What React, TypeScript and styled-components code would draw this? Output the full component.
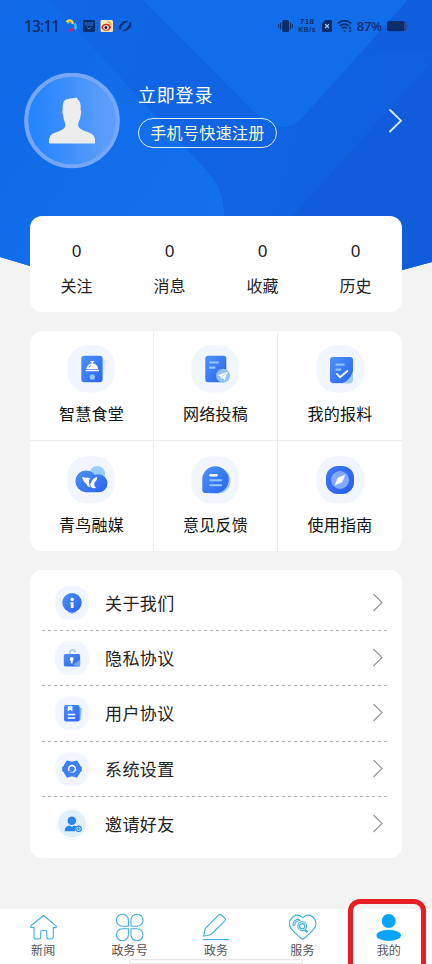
import React from 'react';
import styled, { createGlobalStyle } from 'styled-components';

const GlobalStyle = createGlobalStyle`
  * { box-sizing: border-box; }
  body {
    margin: 0;
    background: #f3f3f3;
    font-family: "Noto Sans CJK SC", "Noto Sans", sans-serif;
    font-weight: 400;
    color: #222;
  }
`;

const Screen = styled.main`
  position: relative;
  width: 432px;
  height: 964px;
  overflow: hidden;
  display: flex;
  flex-direction: column;
  isolation: isolate;
`;

const Backdrop = styled.svg`
  position: absolute;
  top: 0;
  left: 0;
  z-index: -1;
`;

const StatusBar = styled.header`
  height: 51px;
  padding: 0 24px;
  display: flex;
  justify-content: space-between;
  align-items: center;
  flex-shrink: 0;
  color: #0b2d6b;
  font-family: "Noto Sans", sans-serif;
`;

const StatusGroup = styled.div<{ $gap: number }>`
  display: flex;
  align-items: center;
  gap: ${(p) => p.$gap}px;
`;

const Clock = styled.span`
  font-size: 15.5px;
  font-weight: 500;
  line-height: 20px;
  letter-spacing: -0.9px;
  width: 36px;
`;

const Speed = styled.span`
  width: 19px;
  display: flex;
  flex-direction: column;
  align-items: center;
  white-space: nowrap;
  font-family: "Liberation Sans", sans-serif;
  font-weight: 700;
  letter-spacing: 0.5px;
`;

const SpeedValue = styled.span`
  font-size: 8px;
  line-height: 9px;
`;

const SpeedUnit = styled.span`
  font-size: 7px;
  line-height: 8px;
`;

const Percent = styled.span`
  font-size: 13px;
  font-weight: 500;
  line-height: 18px;
  padding-top: 1px;
  letter-spacing: -0.2px;
`;

const Profile = styled.section`
  height: 165px;
  padding: 22px 29px 0 24px;
  display: flex;
  align-items: flex-start;
  color: #fff;
  flex-shrink: 0;
`;

const ProfileText = styled.div`
  flex: 1;
  padding: 9px 0 0 18px;
  display: flex;
  flex-direction: column;
  align-items: flex-start;
  gap: 12px;
`;

const LoginTitle = styled.div`
  font-size: 18px;
  line-height: 24px;
  letter-spacing: 0.8px;
`;

const RegisterButton = styled.button`
  width: 139px;
  height: 30px;
  padding: 0 0 2px;
  border: 1px solid #d9ecf4;
  border-radius: 15px;
  background: transparent;
  color: #f9fbd5;
  font-family: inherit;
  font-size: 16px;
  letter-spacing: 0.35px;
  line-height: 24px;
  white-space: nowrap;
`;

const ProfileArrow = styled.svg`
  margin-top: 35px;
`;

const Card = styled.section`
  width: 372px;
  margin: 0 30px;
  background: #fff;
  border-radius: 12px;
  flex-shrink: 0;
`;

const StatsCard = styled(Card)`
  height: 96px;
  display: grid;
  grid-template-columns: repeat(4, 1fr);
`;

const Stat = styled.div`
  display: flex;
  flex-direction: column;
  align-items: center;
  padding-top: 23px;
  gap: 10px;
`;

const StatValue = styled.span`
  font-family: "Noto Sans", sans-serif;
  font-size: 17px;
  line-height: 24px;
`;

const StatLabel = styled.span`
  font-size: 16px;
  line-height: 24px;
`;

const FeatureCard = styled(Card)`
  height: 220px;
  margin-top: 19px;
  display: grid;
  grid-template-columns: 123px 123px 124px;
  grid-template-rows: 109px 110px;
  gap: 1px;
  background: #ededed;
  overflow: hidden;
`;

const Feature = styled.div`
  background: #fff;
  padding-top: 14px;
  display: flex;
  flex-direction: column;
  align-items: center;
  gap: 8px;
  font-size: 16px;
  line-height: 24px;
  letter-spacing: 0.3px;
  color: #111;

  svg { margin-right: 1px; }
  &:nth-child(n + 4) { padding-top: 15px; }
`;

const MenuCard = styled(Card)`
  height: 288px;
  margin-top: 19px;
  padding: 6px 12px 5px;
`;

const MenuRow = styled.div`
  height: 55.2px;
  padding: 0 6px 1px 13px;
  display: flex;
  align-items: center;
  background: repeating-linear-gradient(90deg, #b5b5b5 0 3px, transparent 3px 6px) left bottom / 345px 1px no-repeat;

  &:last-child { background: none; }
`;

const MenuLabel = styled.span`
  flex: 1;
  padding-left: 16px;
  font-size: 17px;
  line-height: 24px;
  letter-spacing: 0.4px;
`;

const TabBar = styled.nav`
  height: 55px;
  margin-top: auto;
  background: #fff;
  display: grid;
  grid-template-columns: repeat(5, 1fr);
`;

const Tab = styled.div`
  display: flex;
  flex-direction: column;
  align-items: center;
  padding-top: 4px;
  font-size: 12px;
  line-height: 16px;
  color: #555;
  letter-spacing: 0.1px;
  gap: 1px;
`;

const HomeIndicator = styled.div`
  position: absolute;
  left: 129px;
  bottom: 0;
  width: 174px;
  height: 5px;
  border: 1px solid #e6e6e6;
  border-radius: 2px;
  background: #fff;
`;

const Highlight = styled.div`
  position: absolute;
  left: 348px;
  top: 899px;
  width: 78px;
  height: 80px;
  border: 5px solid #e81e25;
  border-radius: 12px;
`;

const HeaderBackdrop = () => (
  <Backdrop width="432" height="310" viewBox="0 0 432 310">
    <defs>
      <linearGradient id="base" x1="0" y1="0" x2="1" y2="0.2">
        <stop offset="0" stopColor="#1168e6" />
        <stop offset="1" stopColor="#1060e0" />
      </linearGradient>
      <linearGradient id="leftPlane" x1="0" y1="0" x2="1" y2="1">
        <stop offset="0" stopColor="#1169e7" />
        <stop offset="1" stopColor="#1272ef" />
      </linearGradient>
      <clipPath id="headerShape"><path d="M0 0H432V262L258 309Q216 320 174 309L0 257Z" /></clipPath>
    </defs>
    <g clipPath="url(#headerShape)">
      <rect width="432" height="310" fill="url(#base)" />
      <path d="M0 0H48L207 171Q224 189 224 216V310H0Z" fill="url(#leftPlane)" />
      <path d="M143 0L255 113Q282 139 303 117L408 0Z" fill="#126de9" />
      <path d="M432 62L292 216V310H432Z" fill="#105cdb" />
      <path d="M408 0L364 50L432 52V0Z" fill="#105fdd" />
    </g>
  </Backdrop>
);

const Avatar = () => (
  <svg width="96" height="96" viewBox="0 0 96 96">
    <defs>
      <linearGradient id="avatarFill">
        <stop offset="0.1" stopColor="#2684fc" />
        <stop offset="0.85" stopColor="#5a9dfa" />
      </linearGradient>
    </defs>
    <circle cx="48" cy="47.5" r="45.8" fill="url(#avatarFill)" stroke="#74a7f8" strokeWidth="4" />
    <path d="M25 70.5V66.5Q25.5 61.5 31 59.7Q40 57 41.3 53.5Q41.6 51.5 40.7 49Q39.5 46 39.2 42.5Q37.8 38 38.7 37Q38 28.5 42 26.6Q46 24.9 51.5 25L53 24.2L53.4 26.2Q57.5 28.5 56.6 37Q57.8 38 56.7 42Q56.3 46.5 54.5 49.5Q53.8 52 54.5 53.8Q57 57.2 65 59.5Q70.6 61.5 71 66.5V70.5Z" fill="#ededee" />
  </svg>
);

const GradientDefs = styled.svg`
  position: absolute;
`;

const BlueGradient = () => (
  <GradientDefs width="0" height="0">
    <defs>
      <linearGradient id="blue" x1="0" y1="0" x2="1" y2="1">
        <stop offset="0" stopColor="#4d91f8" />
        <stop offset="1" stopColor="#2965ef" />
      </linearGradient>
    </defs>
  </GradientDefs>
);

const FeatureIcon = ({ children }: { children: React.ReactNode }) => (
  <svg width="48" height="48" viewBox="0 0 48 48" fill="none">
    <rect x="0.3" y="0.3" width="47.4" height="47.2" rx="20" fill="#f1f6fe" />
    {children}
  </svg>
);

const features = [
  {
    label: '智慧食堂',
    icon: (
      <>
        <path d="M33 14L39 15L37 30L34 34Z" fill="#d9e8ff" />
        <rect x="14.3" y="10.7" width="21.3" height="26.6" rx="3" fill="url(#blue)" />
        <path d="M19.5 24a5.8 5.8 0 0 1 11.6 0ZM18.7 24.8H32v1.4H18.7Z" fill="#fff" />
        <path d="M23.3 16.6h4M25.3 16.6v2" stroke="#fff" strokeWidth="1.3" />
        <path d="M22 22.5q.5-1.8 2-2.2" stroke="#5996f6" strokeWidth="0.8" />
        <circle cx="25.3" cy="32" r="2.7" fill="#93c5fc" />
      </>
    ),
  },
  {
    label: '网络投稿',
    icon: (
      <>
        <rect x="14.3" y="10.7" width="21" height="26.6" rx="3" fill="url(#blue)" />
        <path d="M19 17.5h8M19 22.7h4.5" stroke="#8fc1fd" strokeWidth="2.2" strokeLinecap="round" />
        <circle cx="32" cy="30.7" r="7" fill="#93c3f8" />
        <path d="M27 30.3L36.7 26.7L33.6 35.3L31.4 32.8L29.8 34.3L29.9 31.7Z" fill="#fff" />
        <path d="M30.7 32L35 28.2" stroke="#93c3f8" strokeWidth="0.7" />
      </>
    ),
  },
  {
    label: '我的报料',
    icon: (
      <>
        <path d="M16 34V38.5H34.5L37 36V27Z" fill="#a4ccff" />
        <path d="M17 12H34Q37 12 37 15V26Q34 36 26 38H17Q14 38 14 35V15Q14 12 17 12Z" fill="url(#blue)" />
        <path d="M20.4 19.7h7.3M20.4 24.7h4" stroke="#8fc1fd" strokeWidth="2.2" strokeLinecap="round" />
        <path d="M20.5 28.5L24 32.2L32 25.5" stroke="#fff" strokeWidth="1.8" />
      </>
    ),
  },
  {
    label: '青鸟融媒',
    icon: (
      <>
        <circle cx="30.3" cy="17.8" r="7.8" fill="#9bccff" />
        <path d="M18.5 36.3A11 11 0 0 1 8.4 25.5A10.7 10.7 0 0 1 27.8 19Q29.5 18.3 31.5 18.3A9 9 0 0 1 31.5 36.3Z" fill="url(#blue)" />
        <path d="M15 20.8Q17.5 22 20 21.8Q22.2 21.3 23.5 22.3Q21.5 23.8 22 26.5L23.2 31.5Q19.9 30.6 19.4 28Q16.2 26 15 20.8Z" fill="#fff" />
        <path d="M30.2 20.8Q30.3 24.4 27.7 26.3Q26.2 29.5 29 31.8Q26.2 33.4 23.7 30.5Q22.7 27.5 25 24.7Q26.2 22.5 30.2 20.8Z" fill="#fff" />
      </>
    ),
  },
  {
    label: '意见反馈',
    icon: (
      <>
        <path d="M26 12A13 12.8 0 0 1 28 37.5H18V12Z" fill="#98c7fe" />
        <path d="M24.3 10.3a13.4 13.4 0 0 1 0 26.8H14Q11.5 37 11.3 34.5V23.7A13.2 13.2 0 0 1 24.3 10.3Z" fill="url(#blue)" />
        <path d="M19.5 19.2h6" stroke="#fff" strokeWidth="2.4" strokeLinecap="round" />
        <path d="M19.2 24.2h11M19.2 29.2h11" stroke="#99c7ff" strokeWidth="2" strokeLinecap="round" />
      </>
    ),
  },
  {
    label: '使用指南',
    icon: (
      <>
        <rect x="10" y="10" width="28" height="28" rx="12" fill="url(#blue)" />
        <rect x="10" y="10" width="28" height="28" rx="12" fill="#204ff0" fillOpacity="0.35" />
        <circle cx="24" cy="24" r="9" fill="#83aafb" />
        <path d="M29.2 18.8L26.3 26.2L18.7 29.2L21.7 21.8Z" fill="#fff" />
      </>
    ),
  },
];

const MenuIcon = ({ children }: { children: React.ReactNode }) => (
  <svg width="34" height="34" viewBox="0 0 34 34" fill="none">{children}</svg>
);

const Tile = () => <rect x="0.2" y="0.2" width="33.6" height="33.6" rx="14" fill="#f1f6fe" />;

const menu = [
  {
    label: '关于我们',
    icon: (
      <>
        <Tile />
        <path d="M13 26L17 28L22 26Z" fill="#8bb9fc" />
        <circle cx="17" cy="16.7" r="9.7" fill="url(#blue)" />
        <circle cx="17.2" cy="13.5" r="1.7" fill="#fff" />
        <path d="M15.4 16.3h3.2v5.8h-2.8v-3.8h-.4Z" fill="#fff" />
      </>
    ),
  },
  {
    label: '隐私协议',
    icon: (
      <>
        <Tile />
        <path d="M15 13.5V11.5a2.7 2.7 0 0 1 5.4 0" stroke="#95c8fe" strokeWidth="1.3" />
        <rect x="8.8" y="13" width="16.3" height="12.5" rx="1.6" fill="url(#blue)" />
        <path d="M18 24L25.1 18.5V24Q25 25.5 23.5 25.5Z" fill="#6fa6fa" />
        <circle cx="16.7" cy="17.9" r="2" fill="#fff" />
        <path d="M16.7 18v4.4" stroke="#fff" strokeWidth="1.9" />
      </>
    ),
  },
  {
    label: '用户协议',
    icon: (
      <>
        <Tile />
        <path d="M23 11.5L27 12L25.5 24L22 25Z" fill="#8bbcff" />
        <rect x="9" y="9" width="15.6" height="16.5" rx="2" fill="url(#blue)" />
        <path d="M12.8 10.2h4.6v5.2l-2.3-1.6-2.3 1.6Z" fill="#fff" />
        <path d="M12.8 18.5h7.5M12.8 22h7.5" stroke="#fff" strokeWidth="1.4" />
      </>
    ),
  },
  {
    label: '系统设置',
    icon: (
      <>
        <Tile />
        <path d="M12.4 9.2L14.8 10Q17 10.9 19.2 10L21.6 9.2L23.6 12.2Q24 14.2 26 15.5V18.5Q24 19.8 23.6 21.8L21.6 24.8L19.2 24Q17 23.1 14.8 24L12.4 24.8L10.4 21.8Q10 19.8 8 18.5V15.5Q10 14.2 10.4 12.2Z" fill="#3f80f6" stroke="#3f80f6" strokeWidth="1.6" strokeLinejoin="round" />
        <path d="M14.2 18.8A3.4 3.4 0 1 1 17.9 20.2" stroke="#fff" strokeWidth="1.4" />
        <path d="M15 19.7q1.3 1.2 3 .5" stroke="#91c3ff" strokeWidth="1.2" />
      </>
    ),
  },
  {
    label: '邀请好友',
    icon: (
      <>
        <circle cx="17" cy="16.7" r="15.9" fill="#fff" stroke="#eef5fc" strokeWidth="0.8" />
        <circle cx="17" cy="16.7" r="14" fill="#e1eff9" />
        <circle cx="16.8" cy="13.8" r="4.3" fill="#2c82f0" />
        <path d="M9.5 24.3Q10 19.3 14 18.6L17 19.8L19.3 18.6Q20.5 18.9 21 19.6L20 24.3Z" fill="#2c82f0" />
        <circle cx="23.6" cy="21.8" r="2.7" fill="#e1eff9" stroke="#2c82f0" strokeWidth="1.1" />
        <path d="M22.1 21.8h3M23.6 20.3v3" stroke="#2c82f0" strokeWidth="0.9" />
      </>
    ),
  },
];

const tabs = [
  { label: '新闻', icon: <path d="M2 14.5Q1 13.5 2.5 12.3L14.5 2.5L26.8 12.6Q28 13.8 26.7 14.6H24.3V24Q24 26 22.3 26H19.5Q17.8 26 17.8 24V19Q17.8 17.2 16.2 17.2H13.3Q11.7 17.2 11.7 19V24Q11.7 26 10 26H7Q5 26 5 24V14.6Z" /> },
  { label: '政务号', icon: <path d="M13.4 13.2H7.3A6 6 0 1 1 13.4 7.2ZM16 13.2V7.2A6 6 0 1 1 22.1 13.2ZM13.4 15.8V21.3A6 6 0 1 1 7.3 15.8ZM16 15.8H22.1A6 6 0 1 1 16 21.3Z" /> },
  { label: '政务', icon: <path d="M1.5 26.5H28M2.6 23.3L4.2 15.7L17.6 1.8Q19 .9 20.3 2L24 5.3Q25 6.5 23.9 7.8L10 21.5Z" /> },
  {
    label: '服务',
    icon: (
      <>
        <path d="M14.7 26.2Q12.2 25.2 3.6 16.3Q.3 12 2 7.7Q6 .5 12 2.7L14.7 4.6L17.4 2.7Q24 .5 27.4 7.7Q29 12 25.7 16.3Q17.2 25.2 14.7 26.2Z" />
        <circle cx="14.2" cy="13.2" r="4.4" />
        <circle cx="14.2" cy="13.2" r="2.6" />
        <path d="M17 16.6l3 2.1M16.2 17.4l3 2.2M5 12.3Q5.1 6.6 10.7 6.2L11.8 7.5Q6.8 7.8 6.8 12Z" />
      </>
    ),
  },
  {
    label: '我的',
    icon: (
      <g fill="#09a4fb" stroke="none">
        <circle cx="14.7" cy="8" r="7" />
        <ellipse cx="14.7" cy="22.4" rx="12.2" ry="5.6" />
      </g>
    ),
  },
];

export default function App() {
  return (
    <Screen>
      <GlobalStyle />
      <BlueGradient />
      <HeaderBackdrop />
      <StatusBar>
        <StatusGroup $gap={5}>
          <Clock>13:11</Clock>
          <svg width="68" height="14" viewBox="0 0 68 14" fill="none">
            <path d="M1.5 3Q4 .3 7 2.4L8 5" stroke="#ffd33d" strokeWidth="2.4" />
            <path d="M9.5 4.5Q12 8 9.5 10" stroke="#35c2dd" strokeWidth="2.5" />
            <path d="M8 9Q6.5 11.8 3.5 11.5" stroke="#d21e83" strokeWidth="2.6" />
            <path d="M2 4L5 3" stroke="#61cb58" strokeWidth="1.5" />
            <rect x="18" y="1" width="12" height="12" rx="1.6" fill="#0b2d6b" />
            <path d="M19.5 4h9M20 6h8M22 8l2 2 2-2" stroke="#2878df" strokeWidth="1" />
            <rect x="35.5" y="1" width="12.5" height="12" rx="1.5" fill="#fbe7b7" />
            <ellipse cx="41.2" cy="8.2" rx="4.7" ry="3.5" fill="#d92725" />
            <ellipse cx="41" cy="8.5" rx="2.8" ry="2.2" fill="#fff" />
            <circle cx="41" cy="8.4" r="1.5" fill="#171922" />
            <path d="M42.5 3Q46 2.6 46 6" stroke="#f4a32b" strokeWidth="1.4" />
            <path d="M55 10.5Q53.4 8 55.8 5Q58.8 1.8 63 2.2Q59.4 3.4 57.5 5.6Q55.4 8 55 10.5ZM65.3 3.4Q67 6 64.6 9Q61.5 12.2 57.6 11.8Q61 10.5 62.9 8.4Q65 6 65.3 3.4Z" fill="#0b2d6b" stroke="#0b2d6b" strokeWidth="1" />
          </svg>
        </StatusGroup>
        <StatusGroup $gap={5}>
          <svg width="15" height="14" viewBox="0 0 15 14">
            <rect x="4.2" y="1" width="6.8" height="12" rx="1.5" fill="#0b2d6b" />
            <path d="M.7 5v4M2.6 3.8v6.4M12.5 3.8v6.4M14.4 5v4" stroke="#0b2d6b" />
          </svg>
          <Speed>
            <SpeedValue>718</SpeedValue>
            <SpeedUnit>KB/s</SpeedUnit>
          </Speed>
          <svg width="10" height="14" viewBox="0 0 10 14">
            <path d="M3.5 1H8.5Q10 1 10 2.5V11.5Q10 13 8.5 13H1.5Q0 13 0 11.5V4.5Z" fill="#0b2d6b" />
            <path d="M3.2 5.3l3.7 3.7m0-3.7L3.2 9" stroke="#a2bff4" strokeWidth="1.3" />
          </svg>
          <svg width="15" height="14" viewBox="0 0 15 14" fill="none" stroke="#0b2d6b" strokeWidth="1.6">
            <path d="M.6 4.5Q7.5-1.2 14.4 4.5M2.8 7Q7.5 3.2 12 7M4.8 9.4Q7.5 7.3 10 9.4" />
            <circle cx="7.5" cy="12" r="1" fill="#0b2d6b" stroke="none" />
            <path d="M13 8v5M11.8 9.5L13 8l1.2 1.5M11.8 11.5L13 13l1.2-1.5" strokeWidth="0.8" />
          </svg>
          <Percent>87%</Percent>
          <svg width="21" height="12" viewBox="0 0 21 12">
            <rect x="0" y="1" width="17.8" height="10.3" rx="2.4" fill="#0b2d6b" />
            <path d="M17 1.4Q19.5 1.4 19.5 4V8.5Q19.5 11 17 11M20 4.5Q21 6 20 7.8" fill="#254c92" stroke="#254c92" strokeWidth="0.5" />
          </svg>
        </StatusGroup>
      </StatusBar>
      <Profile>
        <Avatar />
        <ProfileText>
          <LoginTitle>立即登录</LoginTitle>
          <RegisterButton>手机号快速注册</RegisterButton>
        </ProfileText>
        <ProfileArrow width="15" height="26" viewBox="0 0 15 26">
          <path d="M1.5 1.5L13 12.7L1.5 24" fill="none" stroke="#dce9ff" strokeWidth="1.8" />
        </ProfileArrow>
      </Profile>
      <StatsCard>
        {['关注', '消息', '收藏', '历史'].map((label) => (
          <Stat key={label}>
            <StatValue>0</StatValue>
            <StatLabel>{label}</StatLabel>
          </Stat>
        ))}
      </StatsCard>
      <FeatureCard>
        {features.map(({ label, icon }) => (
          <Feature key={label}>
            <FeatureIcon>{icon}</FeatureIcon>
            {label}
          </Feature>
        ))}
      </FeatureCard>
      <MenuCard>
        {menu.map(({ label, icon }) => (
          <MenuRow key={label}>
            <MenuIcon>{icon}</MenuIcon>
            <MenuLabel>{label}</MenuLabel>
            <svg width="12" height="20" viewBox="0 0 12 20">
              <path d="M1.5 1L10 9.5L1.5 18" fill="none" stroke="#949494" strokeWidth="1.1" />
            </svg>
          </MenuRow>
        ))}
      </MenuCard>
      <TabBar>
        {tabs.map(({ label, icon }) => (
          <Tab key={label}>
            <svg width="29" height="28" viewBox="0 0 29 28" fill="none" stroke="#3fafe0" strokeWidth="1.1" strokeLinejoin="round">
              {icon}
            </svg>
            {label}
          </Tab>
        ))}
      </TabBar>
      <HomeIndicator />
      <Highlight />
    </Screen>
  );
}
